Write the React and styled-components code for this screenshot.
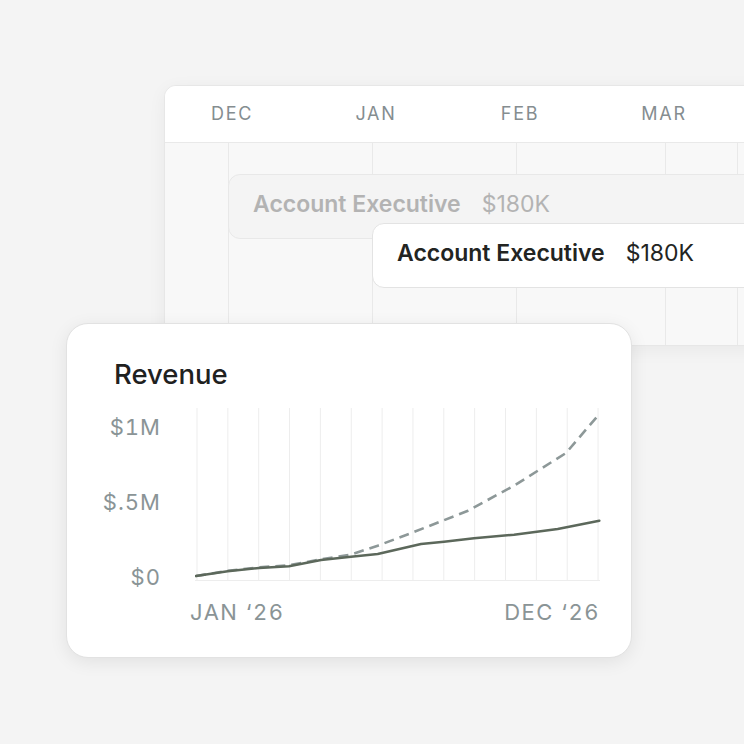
import React from 'react';
import styled, { createGlobalStyle } from 'styled-components';

const GlobalStyle = createGlobalStyle`
  html, body {
    margin: 0;
    padding: 0;
    background: #f4f4f4;
    overflow: hidden;
  }
  body {
    font-family: Inter, "Noto Sans", "Liberation Sans", sans-serif;
  }
`;

const StyledStage = styled.div`
  position: relative;
  width: 744px;
  height: 744px;
  overflow: hidden;
  padding-top: 85px;
  box-sizing: border-box;
`;

const StyledTimeline = styled.div`
  margin-left: 164px;
  width: 640px;
  background: #f8f8f8;
  border: 1px solid #e7e7e7;
  border-radius: 12px;
  box-shadow: 0 4px 18px rgba(0, 0, 0, 0.05);
  overflow: hidden;
`;

const StyledHeader = styled.div`
  display: flex;
  height: 56px;
  align-items: center;
  background: #fff;
  border-bottom: 1px solid #e9e9e9;
  margin-left: -5px;
`;

const StyledMonth = styled.div`
  width: 144px;
  flex: 0 0 144px;
  text-align: center;
  font-size: 18px;
  letter-spacing: 1.7px;
  color: #858d90;
  line-height: 24px;
`;

const StyledBody = styled.div`
  position: relative;
  display: flex;
  height: 202px;
`;

const StyledCell = styled.div`
  flex: 0 0 ${(props) => props.$w}px;
  border-left: ${(props) => (props.$first ? 'none' : '1px solid #e9e9e9')};
  box-sizing: border-box;
`;

const StyledBar = styled.div`
  position: absolute;
  left: ${(props) => props.$left}px;
  top: ${(props) => props.$top}px;
  right: -20px;
  height: 65px;
  box-sizing: border-box;
  display: flex;
  align-items: center;
  gap: 21px;
  padding-left: 24px;
  padding-bottom: 5px;
  border-radius: 12px;
  border: 1px solid ${(props) => (props.$ghost ? '#e8e8e8' : '#e3e3e3')};
  background: ${(props) => (props.$ghost ? '#f4f4f4' : '#ffffff')};
  color: ${(props) => (props.$ghost ? '#b3b3b3' : '#222422')};
  font-size: 23px;
`;

const StyledRole = styled.span`
  font-weight: 600;
`;

const StyledSalary = styled.span`
  font-weight: 400;
`;

const StyledRevenueCard = styled.div`
  position: absolute;
  left: 66px;
  top: 323px;
  width: 566px;
  height: 335px;
  box-sizing: border-box;
  background: #fff;
  border: 1px solid #e2e2e2;
  border-radius: 22px;
  box-shadow: 0 4px 18px rgba(0, 0, 0, 0.08);
  padding: 34px 0 0 47px;
`;

const StyledTitle = styled.div`
  font-size: 27.5px;
  line-height: 32px;
  font-weight: 500;
  color: #1f211f;
`;

const StyledChartRow = styled.div`
  display: flex;
  margin-top: 14px;
  margin-left: -17px;
`;

const StyledYAxis = styled.div`
  width: 64px;
  display: flex;
  flex-direction: column;
  align-items: flex-end;
  gap: 51px;
  padding-top: 11px;
  margin-right: 34px;
`;

const StyledAxisLabel = styled.div`
  font-size: 22px;
  line-height: 24px;
  color: #8a9496;
  font-variant-numeric: tabular-nums;
  letter-spacing: ${(props) => props.$spacing || 0}px;
  white-space: nowrap;
`;

const StyledXAxis = styled.div`
  display: flex;
  justify-content: space-between;
  width: 410px;
  margin-left: 76px;
  margin-top: 11px;
`;

const solid = [
  [1, 172], [32.7, 167.3], [64, 164], [94, 162.3], [126, 156], [156, 152.7],
  [182.7, 150], [226, 140], [249, 137.7], [279, 134.3], [319, 130.7],
  [362.7, 125], [404.3, 116.7],
];

const dashed = [
  [1, 172], [32.7, 166.8], [64, 163.3], [94, 161.3], [126, 155.3], [156, 150.5],
  [182.7, 141.7], [219, 128], [273, 106.7], [319, 81.7], [371, 49], [404.3, 10],
];

const toPoints = (pts) => pts.map(([x, y]) => `${x},${y}`).join(' ');

const RevenueChart = () => {
  const lines = Array.from({ length: 14 }, (_, i) => 2 + i * 30.85);
  return (
    <svg width="406" height="180" viewBox="0 0 406 180">
      {lines.map((x) => (
        <line key={x} x1={x} y1="4" x2={x} y2="176" stroke="#ededed" strokeWidth="1" />
      ))}
      <line x1="0" y1="176.5" x2="405" y2="176.5" stroke="#ededed" strokeWidth="1" />
      <polyline
        points={toPoints(dashed)}
        fill="none"
        stroke="#8d9898"
        strokeWidth="2.6"
        strokeDasharray="10 6"
        strokeLinejoin="round"
      />
      <polyline
        points={toPoints(solid)}
        fill="none"
        stroke="#5c685b"
        strokeWidth="2.6"
        strokeLinejoin="round"
        strokeLinecap="round"
      />
    </svg>
  );
};

const months = ['DEC', 'JAN', 'FEB', 'MAR'];
const cells = [63, 144, 144, 149, 72, 200];

export const App = () => {
  return (
    <>
      <GlobalStyle />
      <StyledStage>
        <StyledTimeline>
          <StyledHeader>
            {months.map((m) => (
              <StyledMonth key={m}>{m}</StyledMonth>
            ))}
          </StyledHeader>
          <StyledBody>
            {cells.map((w, i) => (
              <StyledCell key={i} $w={w} $first={i === 0} />
            ))}
            <StyledBar $ghost $left={63} $top={31}>
              <StyledRole>Account Executive</StyledRole>
              <StyledSalary>$180K</StyledSalary>
            </StyledBar>
            <StyledBar $left={207} $top={80}>
              <StyledRole>Account Executive</StyledRole>
              <StyledSalary>$180K</StyledSalary>
            </StyledBar>
          </StyledBody>
        </StyledTimeline>

        <StyledRevenueCard>
          <StyledTitle>Revenue</StyledTitle>
          <StyledChartRow>
            <StyledYAxis>
              <StyledAxisLabel $spacing={1}>$1M</StyledAxisLabel>
              <StyledAxisLabel $spacing={1}>$.5M</StyledAxisLabel>
              <StyledAxisLabel $spacing={1}>$0</StyledAxisLabel>
            </StyledYAxis>
            <RevenueChart />
          </StyledChartRow>
          <StyledXAxis>
            <StyledAxisLabel $spacing={1.5}>JAN ‘26</StyledAxisLabel>
            <StyledAxisLabel $spacing={1.5}>DEC ‘26</StyledAxisLabel>
          </StyledXAxis>
        </StyledRevenueCard>
      </StyledStage>
    </>
  );
};

export default App;
